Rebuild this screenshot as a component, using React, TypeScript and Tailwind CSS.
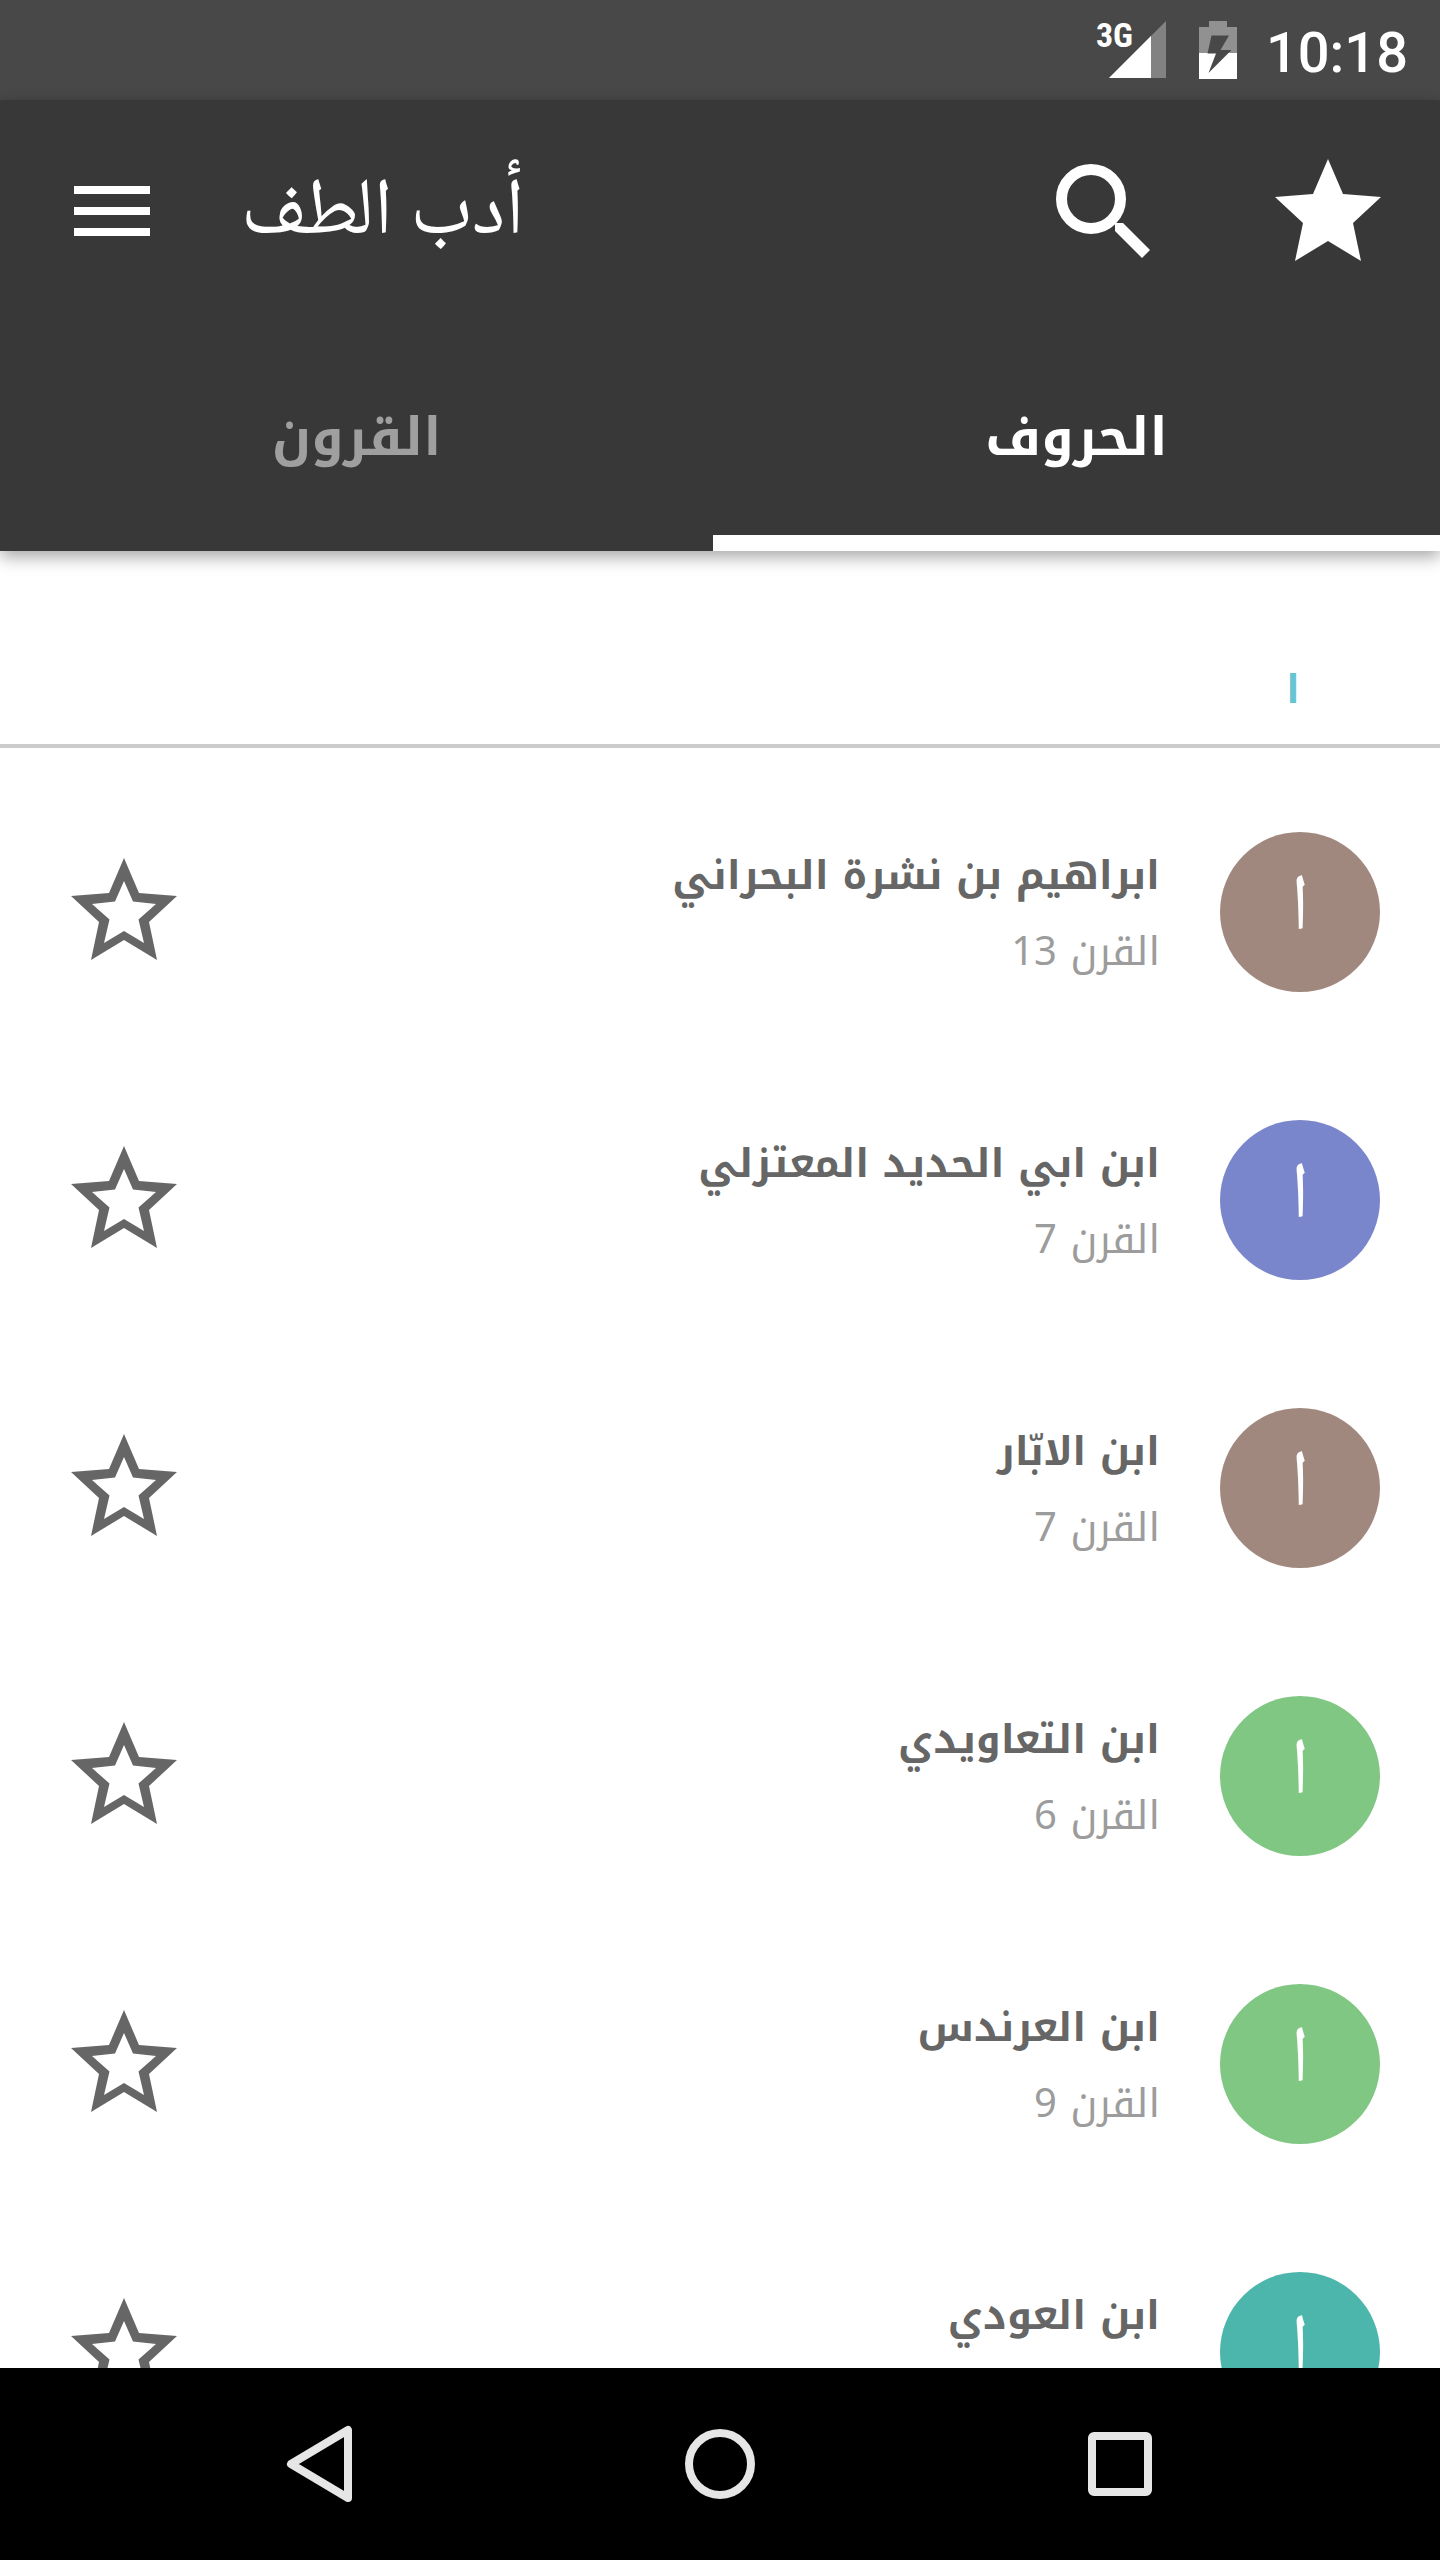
const poets = [
  { name: 'ابراهيم بن نشرة البحراني', century: 'القرن 13', color: 'bg-[#a1887f]' },
  { name: 'ابن ابي الحديد المعتزلي', century: 'القرن 7', color: 'bg-[#7986cb]' },
  { name: 'ابن الابّار', century: 'القرن 7', color: 'bg-[#a1887f]' },
  { name: 'ابن التعاويدي', century: 'القرن 6', color: 'bg-[#81c784]' },
  { name: 'ابن العرندس', century: 'القرن 9', color: 'bg-[#81c784]' },
  { name: 'ابن العودي', century: 'القرن 9', color: 'bg-[#4db6ac]' },
]

function StatusBar() {
  return (
    <div className="flex h-[100px] shrink-0 items-center justify-end bg-[#484848] pt-1.5 pr-8 text-white">
      <div className="flex items-start pb-1.5">
        <div className="relative h-[58px] w-[70px]">
          <svg className="h-full w-full" viewBox="0 0 70 58" aria-hidden="true">
            <path d="M13 57 70 0v57z" fill="#828282" />
            <path d="M13 57 55 15v42z" fill="#fff" />
          </svg>
          <span className="absolute -top-0.5 left-0 font-['Roboto_Condensed','Liberation_Sans_Narrow',sans-serif] text-[34px] leading-[32px] font-bold">
            3G
          </span>
        </div>
        <svg className="ml-[33px] h-[58px] w-[38px]" viewBox="0 0 38 58" aria-hidden="true">
          <path d="M10 0h18v6h10v26H0V6h10z" fill="#919191" />
          <path d="M0 32h38v26H0z" fill="#fff" />
          <path d="M12.500 14.500H30L21.500 29h11L9.500 52 17 32.500H8.500z" fill="#484848" />
        </svg>
      </div>
      <time className="ml-[29px] font-['Roboto',sans-serif] text-[56px] leading-[64px] font-medium">10:18</time>
    </div>
  )
}

function Toolbar() {
  return (
    <div className="flex h-[221px] items-center pr-[58px] pl-[74px]">
      <button type="button" aria-label="القائمة">
        <svg className="h-[50px] w-[76px]" viewBox="0 0 76 50" fill="#fff">
          <path d="M0 0h76v8H0zM0 21h76v8H0zM0 42h76v8H0z" />
        </svg>
      </button>
      <h1 className="ml-[91px] flex-1 pt-2.5 text-left font-['Noto_Naskh_Arabic',serif] text-[80px] leading-[120px]">
        أدب الطف
      </h1>
      <button type="button" aria-label="بحث">
        <svg className="h-[94px] w-[94px]" viewBox="0 0 94 94">
          <circle cx="35" cy="35" r="29.500" fill="none" stroke="#fff" strokeWidth="11" />
          <path d="M59 59h8l27 27-8 8-27-27z" fill="#fff" />
        </svg>
      </button>
      <button type="button" aria-label="المفضلة" className="ml-[124px] pb-0.5">
        <svg className="h-[102px] w-[108px]" viewBox="0 0 108 102" fill="#fff">
          <path d="M54 0 69 35 107 38 79 64 87 102 54 82 21 102 29 64 1 38 39 35z" />
        </svg>
      </button>
    </div>
  )
}

function Tabs() {
  return (
    <div role="tablist" className="grid h-[230px] grid-cols-[713fr_727fr] text-[52px] leading-[80px] font-bold">
      <button type="button" role="tab" aria-selected="false" className="border-b-16 border-transparent pt-5 text-[#9f9f9f]">
        القرون
      </button>
      <button type="button" role="tab" aria-selected="true" className="border-b-16 border-white pt-5 text-white">
        الحروف
      </button>
    </div>
  )
}

function PoetRow({ name, century, color }: { name: string; century: string; color: string }) {
  return (
    <li className="flex h-[288px] items-center justify-between pr-[60px] pl-[70px]">
      <button type="button" aria-label={'اضافة ' + name} className="pb-1.5">
        <svg className="h-[102px] w-[108px]" viewBox="0 0 108 102" fill="#666">
          <path
            fillRule="evenodd"
            d="M54 0 69 35 107 38 79 64 87 102 54 82 21 102 29 64 1 38 39 35zM54 23 45 43.500 22 46 39.500 61.500 34 85 54 73 74 85 68.500 61.500 86 46 63 43.500z"
          />
        </svg>
      </button>
      <div className="flex items-center">
        <div dir="rtl" className="pt-1 text-[40px]">
          <p className="leading-[76px] font-bold text-[#666]">{name}</p>
          <p className="leading-[76px] text-[#9c9c9c]">{century}</p>
        </div>
        <span
          className={
            'ml-[60px] flex h-[160px] w-[160px] items-center justify-center rounded-full font-["Noto_Naskh_Arabic",serif] text-[80px] leading-[120px] text-white ' +
            color
          }
        >
          ا
        </span>
      </div>
    </li>
  )
}

function NavBar() {
  return (
    <nav className="flex h-[192px] shrink-0 items-center justify-center gap-[304px] bg-black">
      <button type="button" aria-label="رجوع">
        <svg className="h-24 w-24" viewBox="0 0 96 96" fill="none" stroke="#e6e6e6" strokeWidth="8" strokeLinejoin="round">
          <path d="M76 14v68L19 48z" />
        </svg>
      </button>
      <button type="button" aria-label="الرئيسية">
        <svg className="h-24 w-24" viewBox="0 0 96 96" fill="none" stroke="#e6e6e6" strokeWidth="8">
          <circle cx="48" cy="48" r="31" />
        </svg>
      </button>
      <button type="button" aria-label="التطبيقات">
        <svg className="h-24 w-24" viewBox="0 0 96 96" fill="none" stroke="#e6e6e6" strokeWidth="8">
          <rect x="20" y="20" width="56" height="56" rx="2" />
        </svg>
      </button>
    </nav>
  )
}

export default function App() {
  return (
    <div className="flex h-screen flex-col bg-white font-['Noto_Kufi_Arabic','Noto_Sans',sans-serif]">
      <StatusBar />
      <header className="z-10 shrink-0 bg-[#383838] text-white shadow-[0_6px_16px_rgba(0,0,0,0.35)]">
        <Toolbar />
        <Tabs />
      </header>
      <main className="min-h-0 flex-1 overflow-hidden">
        <h2 dir="rtl" className="flex h-[197px] items-end border-b-4 border-[#ccc] pr-[140px] pb-4 text-[40px] leading-[76px] font-bold text-[#65c5d3]">
          ا
        </h2>
        <ul className="pt-5">
          {poets.map((p) => (
            <PoetRow key={p.name} {...p} />
          ))}
        </ul>
      </main>
      <NavBar />
    </div>
  )
}
